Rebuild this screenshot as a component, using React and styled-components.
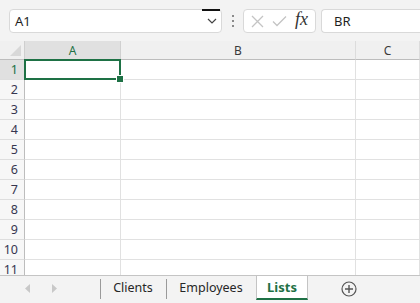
import React from "react";
import styled, { createGlobalStyle } from "styled-components";

const Global = createGlobalStyle`
  html, body { margin: 0; padding: 0; background: #f3f3f3; }
  body { font-family: "Noto Sans", "Open Sans", "Liberation Sans", sans-serif; }
  #root { width: 420px; height: 303px; overflow: hidden; }
`;

const Page = styled.div`
  width: 420px;
  height: 303px;
  display: flex;
  flex-direction: column;
  background: #f3f3f3;
  overflow: hidden;
`;

const TopBar = styled.div`
  height: 41px;
  flex: none;
  box-sizing: border-box;
  padding: 9px 0 0 9px;
  display: flex;
  align-items: flex-start;
`;

const Box = styled.div`
  height: 24px;
  box-sizing: border-box;
  border: 1px solid #d9d9d9;
  border-radius: 4px;
  background: #ffffff;
  display: flex;
  align-items: center;
`;

const NameBox = styled(Box)`
  width: 213px;
  position: relative;
`;

const BoxText = styled.span`
  flex: 1;
  padding-left: ${(p) => p.$pad}px;
  font-size: 13px;
  color: #1f1f1f;
`;

const DropBtn = styled.div`
  position: relative;
  width: 19px;
  height: 22px;
  display: flex;
  align-items: center;
  justify-content: center;
  &::before {
    content: "";
    position: absolute;
    top: -1px;
    left: 0;
    right: 1px;
    height: 2px;
    background: #111;
  }
`;

const Dots = styled.div`
  width: 21px;
  height: 24px;
  display: flex;
  flex-direction: column;
  align-items: center;
  justify-content: center;
  gap: 3px;
  span {
    width: 2px;
    height: 2px;
    background: #8a8a8a;
  }
`;

const FxGroup = styled(Box)`
  width: 73px;
  justify-content: space-around;
  padding: 0 3px;
`;

const FxText = styled.span`
  font-family: "Liberation Serif", "DejaVu Serif", serif;
  font-style: italic;
  font-size: 18px;
  color: #333;
  margin-top: -3px;
`;

const FormulaBox = styled(Box)`
  flex: 1;
  margin-left: 5px;
  border-right: none;
  border-top-right-radius: 0;
  border-bottom-right-radius: 0;
`;

const Sheet = styled.div`
  flex: 1;
  display: grid;
  grid-template-columns: 25px 96px 235px 1fr;
  grid-template-rows: 19px repeat(11, 20px);
  background: #ffffff;
  overflow: hidden;
  min-height: 0;
`;

const Corner = styled.div`
  background: #f0f0f0;
  border-right: 1px solid #cfcfcf;
  border-bottom: 1px solid #bdbdbd;
  position: relative;
  &::after {
    content: "";
    position: absolute;
    right: 3px;
    bottom: 3px;
    border-style: solid;
    border-width: 0 0 11px 11px;
    border-color: transparent transparent #d8d8d8 transparent;
  }
`;

const ColHead = styled.div`
  background: ${(p) => (p.$active ? "#e0e0e0" : "#f0f0f0")};
  border-right: 1px solid ${(p) => (p.$active ? "#d0d0d0" : "#dcdcdc")};
  border-bottom: 1px solid #bdbdbd;
  display: flex;
  align-items: center;
  justify-content: center;
  font-size: 12px;
  color: ${(p) => (p.$active ? "#1e7145" : "#3a3a3a")};
`;

const RowHead = styled.div`
  background: ${(p) => (p.$active ? "#e0e0e0" : "#f7f7f7")};
  border-right: 1px solid #bdbdbd;
  border-bottom: 1px solid #dedede;
  display: flex;
  align-items: center;
  justify-content: flex-end;
  padding-right: 6px;
  font-size: 12.5px;
  color: ${(p) => (p.$active ? "#1e7145" : "#363650")};
`;

const Cell = styled.div`
  border-right: 1px solid #e1e1e1;
  border-bottom: 1px solid #e1e1e1;
  position: relative;
  ${(p) =>
    p.$selected &&
    `
    &::before {
      content: "";
      position: absolute;
      left: -1px;
      top: -1px;
      right: -1px;
      bottom: -1px;
      border: 2px solid #1e7145;
      z-index: 2;
    }
    &::after {
      content: "";
      position: absolute;
      right: -4px;
      bottom: -4px;
      width: 6px;
      height: 6px;
      background: #1e7145;
      border: 1px solid #fff;
      z-index: 3;
    }
  `}
`;

const TabBar = styled.div`
  height: 28px;
  flex: none;
  box-sizing: border-box;
  border-top: 1px solid #c4c4c4;
  background: #f3f3f3;
  display: flex;
  align-items: stretch;
`;

const Nav = styled.div`
  width: 100px;
  display: flex;
  align-items: center;
  padding-left: 25px;
  padding-bottom: 2px;
  box-sizing: border-box;
  gap: 20px;
`;

const Tab = styled.div`
  width: ${(p) => p.$w}px;
  box-sizing: border-box;
  display: flex;
  align-items: center;
  justify-content: center;
  padding-bottom: 3px;
  font-size: 12.5px;
  line-height: 16px;
  color: #262626;
  position: relative;
  &::before {
    content: "";
    position: absolute;
    left: 0;
    top: 3px;
    bottom: 4px;
    width: 1px;
    background: #9a9a9a;
  }
`;

const ActiveTab = styled.div`
  margin-top: -1px;
  width: 52px;
  box-sizing: border-box;
  background: #ffffff;
  border-left: 1px solid #c4c4c4;
  border-right: 1px solid #c4c4c4;
  border-top: 1px solid #c4c4c4;
  border-bottom: 2px solid #1e7145;
  height: 25px;
  display: flex;
  align-items: center;
  justify-content: center;
  padding-bottom: 1px;
  font-size: 13px;
  line-height: 16px;
  font-weight: 700;
  color: #1e7145;
`;

const AddBtn = styled.div`
  margin-left: 33px;
  padding-bottom: 2px;
  display: flex;
  align-items: center;
`;

const cols = ["A", "B", "C"];
const rows = Array.from({ length: 11 }, (_, i) => i + 1);

export default function App() {
  return (
    <Page>
      <Global />
      <TopBar>
        <NameBox>
          <BoxText $pad={5}>A1</BoxText>
          <DropBtn>
            <svg width="10" height="6" viewBox="0 0 10 6">
              <path d="M1 1 L5 5 L9 1" fill="none" stroke="#444" strokeWidth="1.2" />
            </svg>
          </DropBtn>
        </NameBox>
        <Dots>
          <span />
          <span />
          <span />
        </Dots>
        <FxGroup>
          <svg width="13" height="13" viewBox="0 0 13 13">
            <path d="M1 1 L12 12 M12 1 L1 12" stroke="#c4c4c4" strokeWidth="1.3" fill="none" />
          </svg>
          <svg width="15" height="12" viewBox="0 0 15 12">
            <path d="M1 6.5 L5 10.5 L14 1.5" stroke="#c4c4c4" strokeWidth="1.3" fill="none" />
          </svg>
          <FxText>fx</FxText>
        </FxGroup>
        <FormulaBox>
          <BoxText $pad={12}>BR</BoxText>
        </FormulaBox>
      </TopBar>
      <Sheet>
        <Corner />
        {cols.map((c) => (
          <ColHead key={c} $active={c === "A"}>
            {c}
          </ColHead>
        ))}
        {rows.map((r) => (
          <React.Fragment key={r}>
            <RowHead $active={r === 1}>{r}</RowHead>
            {cols.map((c) => (
              <Cell key={c} $selected={r === 1 && c === "A"} />
            ))}
          </React.Fragment>
        ))}
      </Sheet>
      <TabBar>
        <Nav>
          <svg width="6" height="9" viewBox="0 0 6 9">
            <path d="M5 0 L0 4.5 L5 9 Z" fill="#c8c8c8" />
          </svg>
          <svg width="6" height="9" viewBox="0 0 6 9">
            <path d="M1 0 L6 4.5 L1 9 Z" fill="#c8c8c8" />
          </svg>
        </Nav>
        <Tab $w={66}>Clients</Tab>
        <Tab $w={90}>Employees</Tab>
        <ActiveTab>Lists</ActiveTab>
        <AddBtn>
          <svg width="16" height="16" viewBox="0 0 16 16">
            <circle cx="8" cy="8" r="7" fill="none" stroke="#555" strokeWidth="1.2" />
            <path d="M8 4 V12 M4 8 H12" stroke="#555" strokeWidth="1.4" />
          </svg>
        </AddBtn>
      </TabBar>
    </Page>
  );
}
